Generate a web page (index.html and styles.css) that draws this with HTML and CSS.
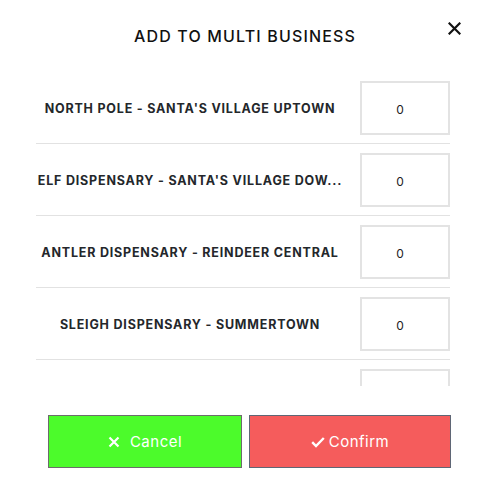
FILE: index.html
```html
<!DOCTYPE html>
<html>
<head>
<meta charset="utf-8">
<link rel="stylesheet" href="styles.css">
</head>
<body>
<div class="modal">
  <div class="header">
    <h1 class="title">ADD TO MULTI BUSINESS</h1>
    <button class="close" aria-label="Close">
      <svg width="13" height="13" viewBox="0 0 13 13"><path d="M1.5 1.5 L11.5 11.5 M11.5 1.5 L1.5 11.5" stroke="#111" stroke-width="2.2" stroke-linecap="square"/></svg>
    </button>
  </div>
  <div class="list">
    <div class="row"><div class="name">NORTH POLE - SANTA'S VILLAGE UPTOWN</div><input class="qty" value="0"></div>
    <div class="row"><div class="name" title="ELF DISPENSARY - SANTA'S VILLAGE DOWNTOWN">ELF DISPENSARY - SANTA'S VILLAGE DOW...</div><input class="qty" value="0"></div>
    <div class="row"><div class="name">ANTLER DISPENSARY - REINDEER CENTRAL</div><input class="qty" value="0"></div>
    <div class="row"><div class="name">SLEIGH DISPENSARY - SUMMERTOWN</div><input class="qty" value="0"></div>
    <div class="row last"><div class="name"></div><input class="qty" value="0"></div>
  </div>
  <div class="footer">
    <button class="btn cancel">
      <svg width="12" height="12" viewBox="0 0 12 12"><path d="M1.5 1.5 L10.5 10.5 M10.5 1.5 L1.5 10.5" stroke="#fff" stroke-width="2.2"/></svg>
      <span class="gap">Cancel</span>
    </button>
    <button class="btn confirm">
      <svg width="14" height="12" viewBox="0 0 14 12"><path d="M1.2 6.2 L5 10 L12.8 2" stroke="#fff" stroke-width="2.4" fill="none"/></svg>
      <span>Confirm</span>
    </button>
  </div>
</div>
</body>
</html>
```
FILE: styles.css
```css
html, body {
  margin: 0;
  padding: 0;
  background: #fff;
}
body {
  font-family: Inter, "DejaVu Sans", sans-serif;
  color: #1f2328;
}
.modal {
  width: 490px;
  height: 492px;
  display: flex;
  flex-direction: column;
}
.header {
  position: relative;
  height: 72px;
  display: flex;
  justify-content: center;
}
.title {
  margin: 25px 0 0;
  font-size: 16px;
  font-weight: 500;
  letter-spacing: 1.15px;
  color: #111;
  line-height: 22px;
}
.close {
  position: absolute;
  top: 22px;
  left: 448px;
  width: 13px;
  height: 13px;
  padding: 0;
  border: 0;
  background: none;
  display: flex;
}
.list {
  margin: 0 40px 0 36px;
  height: 314px;
  overflow: hidden;
}
.row {
  display: flex;
  align-items: center;
  height: 71px;
  border-bottom: 1px solid #e2e2e2;
}
.name {
  width: 308px;
  margin-right: 16px;
  padding-top: 2px;
  text-align: center;
  font-size: 12.5px;
  font-weight: 700;
  letter-spacing: 0.8px;
  white-space: nowrap;
  color: #24272b;
}
.qty {
  box-sizing: border-box;
  width: 90px;
  height: 54px;
  border: 2px solid #e3e3e3;
  text-align: center;
  font-family: Inter, "DejaVu Sans", sans-serif;
  font-size: 12px;
  color: #222;
  padding: 4px 10px 0 0;
  outline: none;
}
.footer {
  display: grid;
  grid-template-columns: 194px 202px;
  column-gap: 7px;
  margin: 29px 0 0 48px;
}
.btn {
  height: 53px;
  border: 1px solid #6c6c6c;
  color: #fff;
  font-family: Inter, "DejaVu Sans", sans-serif;
  font-size: 15px;
  letter-spacing: 0.5px;
  display: flex;
  align-items: center;
  justify-content: center;
  gap: 4px;
  padding: 0;
}
.btn .gap {
  margin-left: 6px;
}
.cancel {
  background: #4cfb2b;
}
.confirm {
  background: #f55c5c;
  border-color: #5f6675;
}
```
